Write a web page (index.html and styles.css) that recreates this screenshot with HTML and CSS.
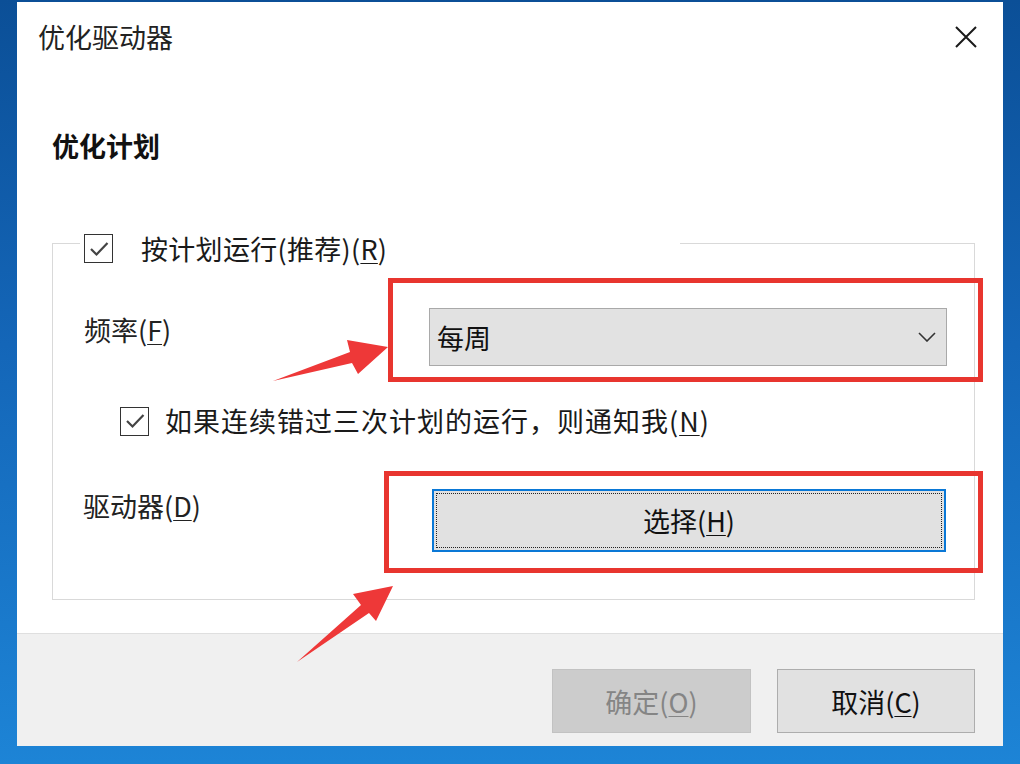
FILE: index.html
```html
<!DOCTYPE html>
<html lang="zh-CN">
<head>
<meta charset="utf-8">
<title>优化驱动器</title>
<link rel="stylesheet" href="styles.css">
</head>
<body>
<div class="window">
  <div class="titlebar">
    <span class="title">优化驱动器</span>
    <svg class="close" width="22" height="22" viewBox="0 0 22 22"><path d="M1 1 L21 21 M21 1 L1 21" stroke="#1a1a1a" stroke-width="2" fill="none"/></svg>
  </div>
  <div class="content">
    <div class="heading">优化计划</div>
    <div class="group">
      <div class="group-head">
        <div class="legend">
          <span class="checkbox"><svg width="26" height="26" viewBox="0 0 26 26"><path d="M5 13 L10.5 18.5 L21.5 7" stroke="#444" stroke-width="2.2" fill="none"/></svg></span>
          <span class="legend-text">按计划运行(推荐)(<u>R</u>)</span>
        </div>
      </div>
      <div class="row-freq">
        <span class="label freq-label">频率(<u>F</u>)</span>
        <div class="mark mark-freq">
          <div class="select">
            <span>每周</span>
            <svg width="18" height="10" viewBox="0 0 18 10"><path d="M1 1 L9 9 L17 1" stroke="#333" stroke-width="1.6" fill="none"/></svg>
          </div>
        </div>
      </div>
      <div class="row-notify">
        <span class="checkbox"><svg width="26" height="26" viewBox="0 0 26 26"><path d="M5 13 L10.5 18.5 L21.5 7" stroke="#444" stroke-width="2.2" fill="none"/></svg></span>
        <span class="notify-text">如果连续错过三次计划的运行，则通知我(<u>N</u>)</span>
      </div>
      <div class="row-drive">
        <span class="label drive-label">驱动器(<u>D</u>)</span>
        <div class="mark mark-drive">
          <button class="choose"><span>选择(<u>H</u>)</span></button>
        </div>
      </div>
    </div>
  </div>
  <div class="footer">
    <button class="btn btn-disabled">确定(<u>O</u>)</button>
    <button class="btn">取消(<u>C</u>)</button>
  </div>
</div>
<svg class="arrows" width="1020" height="764" viewBox="0 0 1020 764">
  <polygon points="273,381 352,363 358,374 388,347 347,340 350,352" fill="#ee3838"/>
  <polygon points="297,662 361,605 353,594 393,586 376,621 369,613" fill="#ee3838"/>
</svg>
</body>
</html>
```

FILE: styles.css
```css
* { box-sizing: border-box; }
html, body { margin: 0; }
body {
  width: 1020px;
  height: 764px;
  overflow: hidden;
  position: relative;
  padding: 2px 17px 0;
  background: linear-gradient(180deg, #0b4f97 0%, #1466b8 45%, #1d84d6 100%);
  font-family: "Noto Sans CJK SC", "Noto Sans", sans-serif;
  font-size: 27px;
  color: #1a1a1a;
}
u { text-decoration: underline; text-underline-offset: 3px; text-decoration-thickness: 1px; }
.window {
  width: 986px;
  height: 744px;
  display: flex;
  flex-direction: column;
  background: #fff;
}
.titlebar {
  height: 70px;
  display: flex;
  align-items: center;
  justify-content: space-between;
  padding: 0 26px 0 21px;
}
.title { font-size: 27px; line-height: 36px; color: #222; }
.close { display: block; }
.content {
  flex: 1;
  padding: 0 28px 33px 35px;
}
.heading {
  margin-top: 56px;
  font-weight: bold;
  line-height: 36px;
  color: #111;
}
.group {
  margin-top: 79px;
  border: 1px solid #d9d9d9;
  border-top: none;
  padding-bottom: 26px;
}
.group-head {
  display: flex;
  align-items: flex-start;
}
.group-head::before {
  content: "";
  width: 27px;
  border-top: 1px solid #d9d9d9;
}
.group-head::after {
  content: "";
  flex: 1;
  border-top: 1px solid #d9d9d9;
}
.legend {
  width: 600px;
  margin-top: -9px;
  padding-left: 4px;
  display: flex;
  align-items: center;
  height: 29px;
}
.legend-text { margin-left: 28px; line-height: 29px; letter-spacing: 0.3px; }
.checkbox {
  width: 29px;
  height: 29px;
  border: 1px solid #333;
  background: #fff;
  display: flex;
  align-items: center;
  justify-content: center;
  flex-shrink: 0;
}
.checkbox svg { display: block; }
.label { line-height: 28px; color: #222; flex-shrink: 0; }
.row-freq {
  margin-top: 15px;
  display: flex;
  align-items: center;
}
.freq-label { width: 335px; padding-left: 31px; }
.mark {
  border: 5px solid #e8352f;
  flex-shrink: 0;
}
.mark-freq {
  width: 595px;
  padding: 25px 31px 11px 36px;
}
.select {
  height: 58px;
  border: 1px solid #a9a9a9;
  background: #e2e2e2;
  display: flex;
  align-items: center;
  justify-content: space-between;
  padding: 0 10px 0 7px;
  color: #111;
}
.select svg { display: block; }
.row-notify {
  margin-top: 25px;
  padding-left: 67px;
  display: flex;
  align-items: center;
  height: 28px;
}
.notify-text { margin-left: 16px; line-height: 28px; letter-spacing: 1px; }
.row-drive {
  margin-top: 36px;
  display: flex;
  align-items: flex-start;
}
.drive-label { width: 331px; padding-left: 30px; margin-top: 21px; }
.mark-drive {
  width: 599px;
  padding: 13px 32px 16px 43px;
}
.choose {
  width: 100%;
  height: 63px;
  border: 2px solid #0a78d6;
  background: #e1e1e1;
  font: inherit;
  color: #111;
  outline: 1px dotted #222;
  outline-offset: -5px;
  display: flex;
  align-items: center;
  justify-content: center;
  padding: 0;
}
.footer {
  height: 113px;
  border-top: 1px solid #dfdfdf;
  background: #f0f0f0;
  display: flex;
  justify-content: flex-end;
  align-items: flex-start;
  gap: 26px;
  padding: 35px 28px 0 0;
}
.btn {
  width: 198px;
  height: 64px;
  border: 1px solid #adadad;
  background: #e1e1e1;
  font: inherit;
  color: #111;
  padding: 0;
}
.btn-disabled {
  width: 199px;
  background: #cccccc;
  border-color: #c2c2c2;
  color: #858585;
}
.arrows {
  position: absolute;
  left: 0;
  top: 0;
  pointer-events: none;
}
```
